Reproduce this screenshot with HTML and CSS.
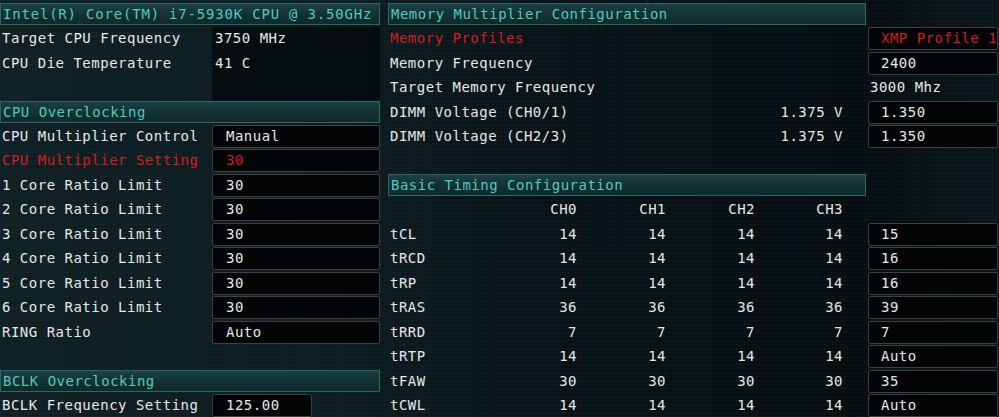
FILE: index.html
```html
<!DOCTYPE html>
<html>
<head>
<meta charset="utf-8">
<link rel="stylesheet" href="styles.css">
</head>
<body>
<div class="screen">
  <section class="panel left">
    <div class="head first">Intel(R) Core(TM) i7-5930K CPU @ 3.50GHz</div>
    <div class="info">
      <div class="row"><span class="lbl">Target CPU Frequency</span><span class="ro">3750 MHz</span></div>
      <div class="row"><span class="lbl">CPU Die Temperature</span><span class="ro">41 C</span></div>
      <div class="row"><span class="lbl"></span><span class="ro"></span></div>
    </div>
    <div class="head">CPU Overclocking</div>
    <div class="row"><span class="lbl">CPU Multiplier Control</span><span class="box">Manual</span></div>
    <div class="row red"><span class="lbl">CPU Multiplier Setting</span><span class="box">30</span></div>
    <div class="row"><span class="lbl">1 Core Ratio Limit</span><span class="box">30</span></div>
    <div class="row"><span class="lbl">2 Core Ratio Limit</span><span class="box">30</span></div>
    <div class="row"><span class="lbl">3 Core Ratio Limit</span><span class="box">30</span></div>
    <div class="row"><span class="lbl">4 Core Ratio Limit</span><span class="box">30</span></div>
    <div class="row"><span class="lbl">5 Core Ratio Limit</span><span class="box">30</span></div>
    <div class="row"><span class="lbl">6 Core Ratio Limit</span><span class="box">30</span></div>
    <div class="row"><span class="lbl">RING Ratio</span><span class="box">Auto</span></div>
    <div class="row spacer"></div>
    <div class="head">BCLK Overclocking</div>
    <div class="row"><span class="lbl">BCLK Frequency Setting</span><span class="box short">125.00</span></div>
  </section>

  <section class="panel right">
    <div class="rhead"><div class="head first">Memory Multiplier Configuration</div></div>
    <div class="mrow red"><span class="mlbl">Memory Profiles</span><span class="box">XMP Profile 1</span></div>
    <div class="mrow"><span class="mlbl">Memory Frequency</span><span class="box">2400</span></div>
    <div class="mrow"><span class="mlbl">Target Memory Frequency</span><span class="plain">3000 Mhz</span></div>
    <div class="mrow"><span class="mlbl">DIMM Voltage (CH0/1)</span><span class="num">1.375 V</span><span class="box">1.350</span></div>
    <div class="mrow"><span class="mlbl">DIMM Voltage (CH2/3)</span><span class="num">1.375 V</span><span class="box">1.350</span></div>
    <div class="mrow"></div>
    <div class="rhead"><div class="head">Basic Timing Configuration</div></div>
    <div class="trow"><span class="tl"></span><span class="c">CH0</span><span class="c">CH1</span><span class="c">CH2</span><span class="c">CH3</span></div>
    <div class="trow"><span class="tl">tCL</span><span class="c">14</span><span class="c">14</span><span class="c">14</span><span class="c">14</span><span class="box">15</span></div>
    <div class="trow"><span class="tl">tRCD</span><span class="c">14</span><span class="c">14</span><span class="c">14</span><span class="c">14</span><span class="box">16</span></div>
    <div class="trow"><span class="tl">tRP</span><span class="c">14</span><span class="c">14</span><span class="c">14</span><span class="c">14</span><span class="box">16</span></div>
    <div class="trow"><span class="tl">tRAS</span><span class="c">36</span><span class="c">36</span><span class="c">36</span><span class="c">36</span><span class="box">39</span></div>
    <div class="trow"><span class="tl">tRRD</span><span class="c">7</span><span class="c">7</span><span class="c">7</span><span class="c">7</span><span class="box">7</span></div>
    <div class="trow"><span class="tl">tRTP</span><span class="c">14</span><span class="c">14</span><span class="c">14</span><span class="c">14</span><span class="box">Auto</span></div>
    <div class="trow"><span class="tl">tFAW</span><span class="c">30</span><span class="c">30</span><span class="c">30</span><span class="c">30</span><span class="box">35</span></div>
    <div class="trow"><span class="tl">tCWL</span><span class="c">14</span><span class="c">14</span><span class="c">14</span><span class="c">14</span><span class="box">Auto</span></div>
  </section>
</div>
</body>
</html>
```
FILE: styles.css
```css
* { box-sizing: border-box; }
html, body { margin: 0; padding: 0; }
body {
  width: 999px;
  height: 417px;
  overflow: hidden;
  background-color: #0b171b;
  background-image:
    repeating-linear-gradient(0deg, rgba(70,130,140,0.05) 0 1px, transparent 1px 4px),
    repeating-linear-gradient(90deg, rgba(70,130,140,0.04) 0 1px, transparent 1px 4px),
    linear-gradient(90deg, #0f1f23 0, #0c1a1e 380px, #081215 560px, #060d10 860px, #0a1518 999px);
  font-family: "DejaVu Sans Mono", "Liberation Mono", monospace;
  font-size: 14px;
  letter-spacing: 0.5px;
  color: #e6e8e8;
}
.screen { display: flex; gap: 8px; padding-top: 1px; }
.panel { display: flex; flex-direction: column; }
.left { width: 380px; }
.right { width: 611px; }

.head {
  height: 22px;
  margin-bottom: 2px;
  padding-left: 2px;
  line-height: 20px;
  color: #52c8c0;
  border: 1.5px solid #2b6668;
  background: linear-gradient(180deg, #1b4044 0%, #12302f 60%, #0f2a2d 100%);
  white-space: nowrap;
  overflow: hidden;
}
.head.first { margin-top: 2px; letter-spacing: 0.8px; }
.right .head.first { letter-spacing: 0.5px; }
.rhead { width: 478px; }

.row {
  height: 24.5px;
  display: flex;
  align-items: flex-start;
}
.row.spacer { height: 25px; }
.lbl {
  width: 212px;
  padding-left: 2px;
  line-height: 23px;
  white-space: nowrap;
}
.ro {
  flex: 1;
  height: 24.5px;
  padding-left: 3px;
  line-height: 23px;
  background: rgba(0,0,0,0.55);
}

.box {
  height: 23px;
  line-height: 21px;
  padding-left: 13px;
  background: #020405;
  border: 1px solid #3a4043;
  border-radius: 2px;
  white-space: nowrap;
}
.left .box { flex: 1; }
.left .box.short { flex: 0 0 100px; }
.red { color: #d41d1d; }

.mrow, .trow {
  height: 24.5px;
  display: grid;
  grid-template-columns: 100px 89px 89px 89px 88px 25px 130px;
  align-items: start;
}
.mlbl { grid-column: 1 / 5; padding-left: 2px; line-height: 23px; white-space: nowrap; }
.num { grid-column: 5; text-align: right; line-height: 23px; white-space: nowrap; }
.mrow .box, .trow .box { grid-column: 7; padding-left: 12px; }
.plain { grid-column: 7; padding-left: 2px; line-height: 23px; white-space: nowrap; }
.tl { grid-column: 1; padding-left: 2px; line-height: 23px; }
.c { text-align: right; line-height: 23px; }
```
